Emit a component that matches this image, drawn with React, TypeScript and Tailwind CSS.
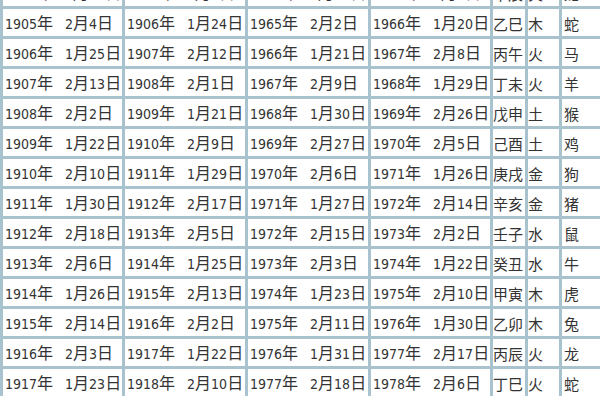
const rows: string[][] = [
  ["1904 2 16", "1905 2 4", "1964 2 13", "1965 2 2", "甲辰", "火", "龙"],
  ["1905 2 4", "1906 1 24", "1965 2 2", "1966 1 20", "乙巳", "木", "蛇"],
  ["1906 1 25", "1907 2 12", "1966 1 21", "1967 2 8", "丙午", "火", "马"],
  ["1907 2 13", "1908 2 1", "1967 2 9", "1968 1 29", "丁未", "火", "羊"],
  ["1908 2 2", "1909 1 21", "1968 1 30", "1969 2 26", "戊申", "土", "猴"],
  ["1909 1 22", "1910 2 9", "1969 2 27", "1970 2 5", "己酉", "土", "鸡"],
  ["1910 2 10", "1911 1 29", "1970 2 6", "1971 1 26", "庚戌", "金", "狗"],
  ["1911 1 30", "1912 2 17", "1971 1 27", "1972 2 14", "辛亥", "金", "猪"],
  ["1912 2 18", "1913 2 5", "1972 2 15", "1973 2 2", "壬子", "水", "鼠"],
  ["1913 2 6", "1914 1 25", "1973 2 3", "1974 1 22", "癸丑", "水", "牛"],
  ["1914 1 26", "1915 2 13", "1974 1 23", "1975 2 10", "甲寅", "木", "虎"],
  ["1915 2 14", "1916 2 2", "1975 2 11", "1976 1 30", "乙卯", "木", "兔"],
  ["1916 2 3", "1917 1 22", "1976 1 31", "1977 2 17", "丙辰", "火", "龙"],
  ["1917 1 23", "1918 2 10", "1977 2 18", "1978 2 6", "丁巳", "火", "蛇"],
];

const DateText = ({ value }: { value: string }) => {
  const [y, m, d] = value.split(" ");
  return (
    <span className="whitespace-nowrap">
      <span>{y}</span>
      <span className="text-[16px]">年</span>
      <span className="ml-[12px]">{m}</span>
      <span className="text-[16px]">月</span>
      <span>{d}</span>
      <span className="text-[16px]">日</span>
    </span>
  );
};

// padding for the three narrow columns (干支, 五行, 生肖)
const narrowPad = ["pl-0", "pl-0", "pl-[2px]"];

export default function App() {
  return (
    <div className="w-[600px] h-[400px] overflow-hidden bg-white">
      <div
        className="-mt-[21px] pl-[3px] grid grid-cols-[119px_120px_120px_119px_32px_31px_44px] gap-[3px] bg-[#a8c2ce] text-[#333333] text-[14px]"
        style={{ fontFamily: '"DejaVu Sans Condensed", "DejaVu Sans", "Noto Sans CJK SC", sans-serif' }}
      >
        {rows.map((row, i) =>
          row.map((cell, j) => (
            <div
              key={`${i}-${j}`}
              className={`h-[27px] bg-white flex items-center pt-[3px] overflow-hidden ${
                j < 4 ? "pl-[2px]" : narrowPad[j - 4]
              }`}
            >
              {j < 4 ? (
                <DateText value={cell} />
              ) : (
                <span
                  className="text-[15px] whitespace-nowrap"
                  style={{ fontFamily: '"Noto Sans CJK SC", sans-serif' }}
                >
                  {cell}
                </span>
              )}
            </div>
          ))
        )}
      </div>
    </div>
  );
}
